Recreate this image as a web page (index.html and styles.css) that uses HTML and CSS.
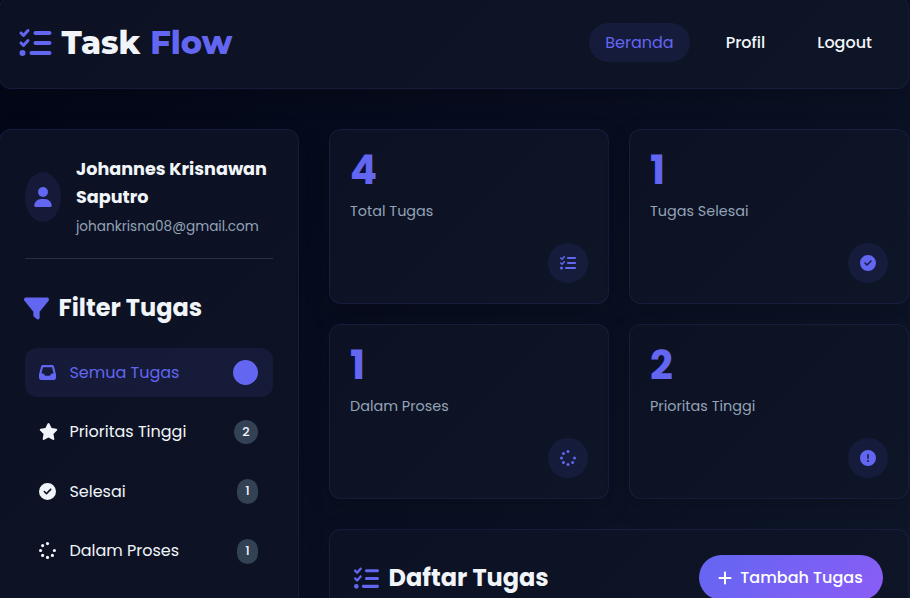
FILE: index.html
```html
<!DOCTYPE html>
<html lang="id">
<head>
<meta charset="utf-8">
<title>Task Flow</title>
<link rel="stylesheet" href="styles.css">
</head>
<body>
<svg class="sprite" aria-hidden="true">
  <symbol id="tasks" viewBox="0 0 512 512"><path d="M152.100 38.200c9.900 8.900 10.700 24 1.800 33.900l-72 80c-4.400 4.900-10.600 7.800-17.200 7.900s-12.900-2.400-17.600-7L7 113c-9.300-9.400-9.300-24.600 0-34s24.600-9.400 33.900 0l22.100 22.100 55.100-61.200c8.900-9.900 24-10.700 33.900-1.800zm0 160c9.900 8.900 10.700 24 1.800 33.900l-72 80c-4.400 4.900-10.600 7.800-17.200 7.900s-12.900-2.400-17.600-7L7 273c-9.300-9.400-9.300-24.600 0-34s24.600-9.400 33.900 0l22.100 22.100 55.100-61.200c8.900-9.900 24-10.700 33.900-1.800zM224 96c0-17.700 14.300-32 32-32h224c17.700 0 32 14.300 32 32s-14.300 32-32 32H256c-17.700 0-32-14.300-32-32zm0 160c0-17.700 14.300-32 32-32h224c17.700 0 32 14.300 32 32s-14.300 32-32 32H256c-17.700 0-32-14.300-32-32zm-64 160c0-17.700 14.300-32 32-32h288c17.700 0 32 14.300 32 32s-14.300 32-32 32H192c-17.700 0-32-14.300-32-32zM48 368a48 48 0 1 1 0 96 48 48 0 1 1 0-96z"/></symbol>
  <symbol id="check" viewBox="0 0 512 512"><path fill-rule="evenodd" d="M256 512a256 256 0 1 0 0-512 256 256 0 1 0 0 512zM369 209L241 337c-9.400 9.400-24.600 9.400-33.900 0l-64-64c-9.400-9.400-9.400-24.600 0-33.900s24.600-9.400 33.900 0l47 47L335 175c9.400-9.400 24.600-9.400 33.900 0s9.400 24.600 0 33.900z"/></symbol>
  <symbol id="alert" viewBox="0 0 512 512"><path fill-rule="evenodd" d="M256 512a256 256 0 1 0 0-512 256 256 0 1 0 0 512zM256 128c13.300 0 24 10.700 24 24v112c0 13.300-10.700 24-24 24s-24-10.700-24-24V152c0-13.300 10.700-24 24-24zM224 352a32 32 0 1 1 64 0 32 32 0 1 1-64 0z"/></symbol>
  <symbol id="spinner" viewBox="0 0 512 512"><circle cx="256" cy="48" r="48"/><circle cx="256" cy="464" r="48"/><circle cx="48" cy="256" r="48"/><circle cx="464" cy="256" r="48"/><circle cx="109" cy="109" r="48"/><circle cx="109" cy="403" r="48"/><circle cx="403" cy="403" r="48"/></symbol>
  <symbol id="user" viewBox="0 0 448 512"><path d="M224 256a128 128 0 1 0 0-256 128 128 0 1 0 0 256zm-45.700 48C79.800 304 0 383.800 0 482.300 0 498.700 13.300 512 29.700 512h388.600c16.400 0 29.700-13.300 29.700-29.700C448 383.800 368.200 304 269.700 304h-91.400z"/></symbol>
  <symbol id="filter" viewBox="0 0 512 512"><path d="M3.900 54.900C10.500 40.900 24.500 32 40 32h432c15.500 0 29.500 8.900 36.100 22.900s4.600 30.500-5.200 42.500L320 320.900V448c0 12.100-6.800 23.200-17.700 28.600s-23.800 4.300-33.500-3l-64-48c-8.100-6-12.800-15.500-12.800-25.600v-79.100L9 97.300C-.7 85.400-2.800 68.800 3.900 54.900z"/></symbol>
  <symbol id="inbox" viewBox="0 0 512 512"><path fill-rule="evenodd" d="M121 32C91.600 32 66 52 58.900 80.500L1.900 308.400C.6 313.500 0 318.700 0 323.900V416c0 35.300 28.700 64 64 64h384c35.300 0 64-28.700 64-64v-92.100c0-5.200-.6-10.400-1.900-15.500l-57-227.900C446 52 420.400 32 391 32H121zm0 64h270l48 192h-51.200c-12.100 0-23.200 6.800-28.600 17.700l-14.300 28.600c-5.400 10.800-16.500 17.700-28.600 17.700H195.800c-12.100 0-23.200-6.800-28.600-17.700l-14.300-28.600c-5.400-10.800-16.500-17.700-28.600-17.700H73L121 96z"/></symbol>
  <symbol id="star" viewBox="0 0 576 512"><path d="M316.900 18C311.600 7 300.400 0 288.100 0s-23.400 7-28.800 18L195 150.300 51.400 171.500c-12 1.800-22 10.200-25.700 21.700s-.7 24.200 7.900 32.700L137.800 329l-24.600 145.700c-2 12 3 24.200 12.900 31.300s23 8 33.800 2.300L288.100 439.800l128.300 68.500c10.800 5.700 23.900 4.900 33.800-2.300s14.900-19.300 12.900-31.300L438.500 329l104.200-103.100c8.600-8.500 11.700-21.200 7.900-32.700s-13.700-19.900-25.700-21.700L381.200 150.300 316.900 18z"/></symbol>
  <symbol id="plus" viewBox="0 0 448 512"><path d="M256 80c0-17.700-14.300-32-32-32s-32 14.300-32 32v144H48c-17.700 0-32 14.300-32 32s14.300 32 32 32h144v144c0 17.700 14.300 32 32 32s32-14.300 32-32V288h144c17.700 0 32-14.300 32-32s-14.300-32-32-32H256V80z"/></symbol>
</svg>
<div class="page">
  <header class="header surface">
    <div class="logo"><svg class="icon"><use href="#tasks"/></svg><span class="logo-task">Task</span><span class="logo-flow">Flow</span></div>
    <nav class="nav">
      <a class="nav-link active">Beranda</a>
      <a class="nav-link">Profil</a>
      <a class="nav-link">Logout</a>
    </nav>
  </header>
  <div class="layout">
    <aside class="sidebar surface">
      <div class="profile">
        <div class="avatar"><svg class="icon"><use href="#user"/></svg></div>
        <div class="who">
          <div class="name">Johannes Krisnawan<br>Saputro</div>
          <div class="email">johankrisna08@gmail.com</div>
        </div>
      </div>
      <h2 class="title filter-title"><svg class="icon"><use href="#filter"/></svg><span>Filter Tugas</span></h2>
      <ul class="filters">
        <li class="filter active"><svg class="icon"><use href="#inbox"/></svg><span>Semua Tugas</span><b class="count empty"></b></li>
        <li class="filter"><svg class="icon wide"><use href="#star"/></svg><span>Prioritas Tinggi</span><b class="count two">2</b></li>
        <li class="filter"><svg class="icon"><use href="#check"/></svg><span>Selesai</span><b class="count">1</b></li>
        <li class="filter"><svg class="icon"><use href="#spinner"/></svg><span>Dalam Proses</span><b class="count">1</b></li>
      </ul>
    </aside>
    <main class="main">
      <section class="stats">
        <article class="stat surface"><div class="value">4</div><div class="label">Total Tugas</div><div class="badge"><svg class="icon"><use href="#tasks"/></svg></div></article>
        <article class="stat surface"><div class="value">1</div><div class="label">Tugas Selesai</div><div class="badge"><svg class="icon"><use href="#check"/></svg></div></article>
        <article class="stat surface"><div class="value">1</div><div class="label">Dalam Proses</div><div class="badge"><svg class="icon"><use href="#spinner"/></svg></div></article>
        <article class="stat surface"><div class="value">2</div><div class="label">Prioritas Tinggi</div><div class="badge"><svg class="icon"><use href="#alert"/></svg></div></article>
      </section>
      <section class="tasks surface">
        <h2 class="title"><svg class="icon"><use href="#tasks"/></svg><span>Daftar Tugas</span></h2>
        <button class="add"><svg class="icon"><use href="#plus"/></svg><span>Tambah Tugas</span></button>
      </section>
    </main>
  </div>
</div>
</body>
</html>
```
FILE: styles.css
```css
:root {
  --primary: #6366f1;
  --text: #f1f5f9;
  --muted: #94a3b8;
  --tint: rgba(99, 102, 241, 0.1);
}
* { box-sizing: border-box; margin: 0; padding: 0; }
html { height: 598px; overflow: hidden; background: #020617; }
body {
  height: 598px;
  overflow: hidden;
  font-family: Poppins, Inter, "Open Sans", sans-serif;
  color: var(--text);
  background: linear-gradient(135deg, #020617 0%, #0f172a 100%);
}
.sprite { display: none; }
.icon { display: block; width: 1em; height: 1em; fill: currentColor; flex: none; }
.page { width: 910px; height: 602px; overflow: hidden; margin: -4px 0 0 -1px; }
.surface {
  background: linear-gradient(135deg, #0c1223, #0e1526);
  border: 1px solid rgba(99, 102, 241, 0.12);
  border-radius: 12px;
  box-shadow: 0 8px 24px rgba(0, 0, 0, 0.2);
}
.header {
  height: 93px;
  padding: 0 20px 0 19px;
  display: flex;
  align-items: center;
  justify-content: space-between;
}
.logo { display: flex; align-items: center; font: 800 32px/40px Montserrat, Inter, sans-serif; }
.logo .icon { width: 33px; height: 32px; color: var(--primary); margin-right: 9.5px; }
.logo-task { margin-right: 10px; }
.logo-flow { color: var(--primary); }
.nav { display: flex; gap: 20px; font-size: 16px; line-height: 24px; font-weight: 500; }
.nav-link { padding: 8px 16px 7px; border-radius: 20px; }
.nav-link.active { background: var(--tint); color: var(--primary); font-weight: 400; }
.layout { display: grid; grid-template-columns: 300px 580px; gap: 30px; margin-top: 40px; }
.sidebar { height: 480px; border-bottom: 0; border-radius: 12px 12px 0 0; padding: 25px; background: linear-gradient(135deg, #0c1223, #0d1324); }
.profile { display: flex; align-items: flex-start; gap: 15px; height: 104px; border-bottom: 1px solid rgba(148, 163, 184, 0.2); }
.avatar { width: 36px; height: 50px; margin-top: 17px; border-radius: 50%; background: var(--tint); color: var(--primary); display: grid; place-items: center; font-size: 20px; }
.who { white-space: nowrap; }
.name { font-size: 17.6px; line-height: 28px; font-weight: 700; }
.email { font-size: 13.6px; line-height: 24px; color: var(--muted); margin-top: 4px; }
.title { display: flex; align-items: center; gap: 9.6px; font-size: 24px; line-height: 36px; font-weight: 700; white-space: nowrap; }
.title .icon { color: var(--primary); font-size: 25px; }
.filter-title { margin: 31px 0 22px -1px; }
.filters { list-style: none; display: grid; gap: 11px; }
.filter { height: 48.5px; padding: 1px 15px 0; border-radius: 12px; display: flex; align-items: center; gap: 13.4px; font-size: 16px; line-height: 24px; white-space: nowrap; }
.filter .icon { font-size: 17px; margin: -1px 0 0 -1px; }
.filter .wide { width: 19px; margin-right: -2px; }
.filter.active { background: var(--tint); color: var(--primary); }
.count { margin-left: auto; width: 21px; height: 25px; border-radius: 12.500px; background: #334155; font-size: 12.8px; line-height: 24px; font-weight: 500; text-align: center; }
.count.two { width: 24px; height: 24px; }
.count.empty { width: 25px; background: var(--primary); }
.stats { display: grid; grid-template-columns: 280px 280px; gap: 20px; }
.stat { height: 175px; padding: 20px; display: flex; flex-direction: column; }
.value { height: 40px; font-size: 40px; line-height: 41px; font-weight: 700; color: var(--primary); }
.label { font-size: 14.4px; line-height: 22px; color: var(--muted); margin-top: 10px; }
.badge { width: 40px; height: 40px; margin: auto 0 0 auto; border-radius: 50%; background: var(--tint); color: var(--primary); display: grid; place-items: center; font-size: 16px; }
.tasks { height: 80px; border-bottom: 0; border-radius: 12px 12px 0 0; margin-top: 30px; padding: 25px 25px 0 24px; display: flex; justify-content: space-between; align-items: flex-start; }
.tasks .title { margin-top: 5px; }
.add { height: 45px; width: 184px; border: 0; border-radius: 23px; color: #fff; display: flex; align-items: center; justify-content: center; gap: 7px; padding-right: 2px; font: 500 16px/24px Poppins, Inter, sans-serif; background: linear-gradient(135deg, #6366f1, #8b5cf6); white-space: nowrap; }
```
